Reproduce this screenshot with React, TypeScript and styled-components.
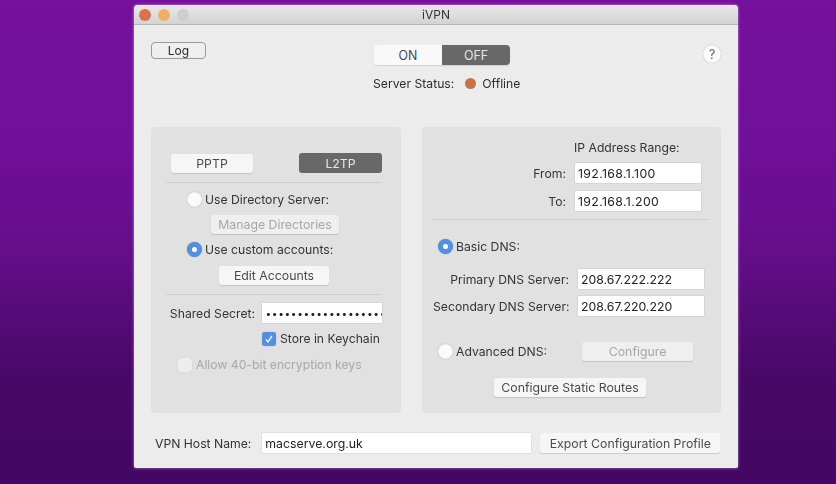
import React from "react";
import styled, { createGlobalStyle } from "styled-components";

const Global = createGlobalStyle`
  html, body { margin: 0; padding: 0; width: 836px; height: 484px; overflow: hidden; }
  body { background: linear-gradient(180deg, #75119c 0%, #700f98 30%, #660e8c 50%, #550b78 65%, #470866 80%, #440763 100%); font-family: Inter, "Liberation Sans", sans-serif; }
  #root { width: 836px; height: 484px; }
`;

const Page = styled.div`
  width: 836px;
  height: 484px;
  padding: 5px 0 0 134px;
  box-sizing: border-box;
`;
const Win = styled.div`
  width: 604px;
  height: 463px;
  background: #ececec;
  border-radius: 4px 4px 2px 2px;
  box-shadow: 0 0 3px rgba(255, 255, 255, 0.55);
  display: flex;
  flex-direction: column;
  color: #2c2c2c;
  font-size: 12.2px;
  filter: blur(0.45px);
`;
const TitleBar = styled.div`
  height: 20px;
  flex: none;
  background: linear-gradient(180deg, #e8e8e8, #d3d3d3);
  border-bottom: 1px solid #b4b4b4;
  border-radius: 4px 4px 0 0;
  display: grid;
  grid-template-columns: 1fr auto 1fr;
  align-items: center;
  padding: 0 5px;
  box-sizing: border-box;
`;
const Lights = styled.div`
  display: flex;
  gap: 7px;
`;
const Light = styled.span<{ $c: string }>`
  width: 12px;
  height: 12px;
  border-radius: 50%;
  background: ${(p) => p.$c};
`;
const Title = styled.div`
  font-size: 12px;
  color: #333;
`;
const Top = styled.div`
  height: 102px;
  flex: none;
  padding: 17px 17px 0;
  box-sizing: border-box;
  display: grid;
  grid-template-columns: 223px 136px 1fr;
  align-items: start;
`;
const LogButton = styled.div`
  width: 55px;
  height: 17px;
  box-sizing: border-box;
  border: 1px solid #999;
  border-radius: 4px;
  background: #efefef;
  display: flex;
  align-items: center;
  justify-content: center;
  font-size: 12px;
`;
const Center = styled.div`
  display: flex;
  flex-direction: column;
  align-items: flex-start;
  padding-top: 3px;
`;
const Segments = styled.div`
  display: flex;
  height: 20px;
  width: 136px;
  border-radius: 4px;
  overflow: hidden;
  box-shadow: 0 1px 1px rgba(0, 0, 0, 0.12);
`;
const Segment = styled.div<{ $on?: boolean }>`
  flex: 1;
  display: flex;
  align-items: center;
  justify-content: center;
  font-size: 12.4px;
  background: ${(p) => (p.$on ? "#686868" : "#f9f9f9")};
  color: ${(p) => (p.$on ? "#e6e6e6" : "#4a4a4a")};
`;
const Status = styled.div`
  margin: 11px 0 0 -1px;
  display: flex;
  align-items: center;
  white-space: nowrap;
`;
const Dot = styled.span`
  width: 11px;
  height: 11px;
  flex: none;
  border-radius: 50%;
  background: #c8714a;
  margin: 0 6px 0 11px;
`;
const HelpWrap = styled.div`
  display: flex;
  justify-content: flex-end;
  padding-top: 3px;
`;
const Help = styled.div`
  width: 18px;
  height: 18px;
  border-radius: 50%;
  background: #fbfbfb;
  box-shadow: 0 0 1px rgba(0, 0, 0, 0.35);
  display: flex;
  align-items: center;
  justify-content: center;
  color: #667a94;
  font-size: 12.5px;
  font-weight: 500;
`;
const Panels = styled.div`
  height: 286px;
  flex: none;
  padding: 0 17px;
  display: flex;
  gap: 21px;
`;
const Panel = styled.div<{ $w: number; $pad: string }>`
  width: ${(p) => p.$w}px;
  flex: none;
  box-sizing: border-box;
  background: #e1e1e1;
  border-radius: 4px;
  padding: ${(p) => p.$pad};
  display: flex;
  flex-direction: column;
`;
const Row = styled.div<{ $top?: number; $left?: number; $h?: number; $w?: number }>`
  display: flex;
  align-items: center;
  height: ${(p) => p.$h ?? 19}px;
  margin-top: ${(p) => p.$top ?? 0}px;
  margin-left: ${(p) => p.$left ?? 0}px;
  ${(p) => (p.$w ? `width: ${p.$w}px; justify-content: space-between;` : "")}
  flex: none;
`;
const Btn = styled.div<{ $w: number; $h?: number; $dark?: boolean; $off?: boolean; $ml?: number }>`
  width: ${(p) => p.$w}px;
  height: ${(p) => p.$h ?? 19}px;
  margin-left: ${(p) => p.$ml ?? 0}px;
  flex: none;
  box-sizing: border-box;
  border-radius: 3px;
  display: flex;
  align-items: center;
  justify-content: center;
  font-size: 12.3px;
  background: ${(p) => (p.$dark ? "#686868" : p.$off ? "#efefef" : "#f6f6f6")};
  color: ${(p) => (p.$dark ? "#e8e8e8" : p.$off ? "#a6a6a6" : "#4a4a4a")};
  box-shadow: ${(p) => (p.$dark ? "none" : "0 1px 1px rgba(0,0,0,0.14)")};
`;
const Divider = styled.div<{ $top: number; $w: number }>`
  height: 1px;
  flex: none;
  background: #cfcfcf;
  width: ${(p) => p.$w}px;
  margin-top: ${(p) => p.$top}px;
`;
const Radio = styled.span<{ $on?: boolean }>`
  width: 15px;
  height: 15px;
  flex: none;
  box-sizing: border-box;
  border-radius: 50%;
  margin-right: 3px;
  background: ${(p) => (p.$on ? "#5590de" : "#fafafa")};
  box-shadow: 0 0 1px rgba(0, 0, 0, 0.4);
  display: flex;
  align-items: center;
  justify-content: center;
  &::after {
    content: "";
    width: 5px;
    height: 5px;
    border-radius: 50%;
    background: ${(p) => (p.$on ? "#fff" : "transparent")};
  }
`;
const Label = styled.span<{ $w?: number; $off?: boolean }>`
  ${(p) => (p.$w ? `width: ${p.$w}px; text-align: right; flex: none;` : "")}
  white-space: nowrap;
  color: ${(p) => (p.$off ? "#a8a8a8" : "#333")};
`;
const Field = styled.div<{ $w: number; $h?: number; $ml?: number; $track?: boolean }>`
  width: ${(p) => p.$w}px;
  height: ${(p) => p.$h ?? 20}px;
  margin-left: ${(p) => p.$ml ?? 7}px;
  flex: none;
  box-sizing: border-box;
  background: #fff;
  box-shadow: 0 0 1px rgba(0, 0, 0, 0.3);
  padding-left: 3px;
  display: flex;
  align-items: center;
  overflow: hidden;
  white-space: nowrap;
  font-size: 12.3px;
  color: #222;
  ${(p) => (p.$track ? "letter-spacing: 0.35px;" : "")}
`;
const Secret = styled(Field)`
  padding-left: 4px;
  font-size: 10px;
  letter-spacing: 1.6px;
  font-weight: 700;
`;
const Check = styled.span<{ $on?: boolean }>`
  width: 14px;
  height: 14px;
  flex: none;
  border-radius: 3px;
  margin-right: 4px;
  background: ${(p) => (p.$on ? "#5590de" : "#ededed")};
  box-shadow: 0 0 1px rgba(0, 0, 0, ${(p) => (p.$on ? 0.4 : 0.2)});
  display: flex;
  align-items: center;
  justify-content: center;
`;
const Bottom = styled.div`
  flex: 1;
  display: flex;
  align-items: center;
  padding: 5px 0 0 21px;
  box-sizing: border-box;
`;

export default function App() {
  return (
    <>
      <Global />
      <Page>
        <Win>
          <TitleBar>
            <Lights>
              <Light $c="#d9734e" />
              <Light $c="#efae62" />
              <Light $c="#cdcdcd" />
            </Lights>
            <Title>iVPN</Title>
            <span />
          </TitleBar>
          <Top>
            <LogButton>Log</LogButton>
            <Center>
              <Segments>
                <Segment>ON</Segment>
                <Segment $on>OFF</Segment>
              </Segments>
              <Status>
                <span>Server Status:</span>
                <Dot />
                <span>Offline</span>
              </Status>
            </Center>
            <HelpWrap>
              <Help>?</Help>
            </HelpWrap>
          </Top>
          <Panels>
            <Panel $w={250} $pad="26px 0 0 15px">
              <Row $left={5} $h={20} $w={211}>
                <Btn $w={82}>PPTP</Btn>
                <Btn $w={83} $h={20} $dark>L2TP</Btn>
              </Row>
              <Divider $top={9} $w={216} />
              <Row $top={7} $left={21} $h={19}>
                <Radio />
                <Label>Use Directory Server:</Label>
              </Row>
              <Row $top={6} $left={45} $h={19}>
                <Btn $w={128} $off>Manage Directories</Btn>
              </Row>
              <Row $top={6} $left={21} $h={19}>
                <Radio $on />
                <Label>Use custom accounts:</Label>
              </Row>
              <Row $top={7} $left={53} $h={19}>
                <Btn $w={110}>Edit Accounts</Btn>
              </Row>
              <Divider $top={9} $w={216} />
              <Row $top={8} $h={20}>
                <Label $w={89}>Shared Secret:</Label>
                <Secret $w={120} $ml={7}>•••••••••••••••••••</Secret>
              </Row>
              <Row $top={6} $left={96} $h={19}>
                <Check $on>
                  <svg width="10" height="10" viewBox="0 0 10 10" fill="none">
                    <path d="M2 5.4 L4 8 L8 1.8" stroke="#fff" strokeWidth="1.2" />
                  </svg>
                </Check>
                <Label>Store in Keychain</Label>
              </Row>
              <Row $top={7} $left={12} $h={19}>
                <Check />
                <Label $off>Allow 40-bit encryption keys</Label>
              </Row>
            </Panel>
            <Panel $w={299} $pad="11px 0 0 11px">
              <Row $left={141} $h={19}>
                <Label>IP Address Range:</Label>
              </Row>
              <Row $top={6} $h={20}>
                <Label $w={133}>From:</Label>
                <Field $w={126} $ml={9} $track>192.168.1.100</Field>
              </Row>
              <Row $top={8} $h={20}>
                <Label $w={133}>To:</Label>
                <Field $w={126} $ml={9} $track>192.168.1.200</Field>
              </Row>
              <Divider $top={8} $w={276} />
              <Row $top={17} $left={5} $h={19}>
                <Radio $on />
                <Label>Basic DNS:</Label>
              </Row>
              <Row $top={13} $h={20}>
                <Label $w={136}>Primary DNS Server:</Label>
                <Field $w={126} $ml={9}>208.67.222.222</Field>
              </Row>
              <Row $top={7} $h={20}>
                <Label $w={136}>Secondary DNS Server:</Label>
                <Field $w={126} $ml={9}>208.67.220.220</Field>
              </Row>
              <Row $top={26} $left={5} $h={19}>
                <Radio />
                <Label>Advanced DNS:</Label>
                <Btn $w={111} $off $ml={35}>Configure</Btn>
              </Row>
              <Row $top={17} $left={61} $h={19}>
                <Btn $w={152}>Configure Static Routes</Btn>
              </Row>
            </Panel>
          </Panels>
          <Bottom>
            <Label>VPN Host Name:</Label>
            <Field $w={269} $ml={11}>macserve.org.uk</Field>
            <Btn $w={180} $h={20} $ml={9}>Export Configuration Profile</Btn>
          </Bottom>
        </Win>
      </Page>
    </>
  );
}
